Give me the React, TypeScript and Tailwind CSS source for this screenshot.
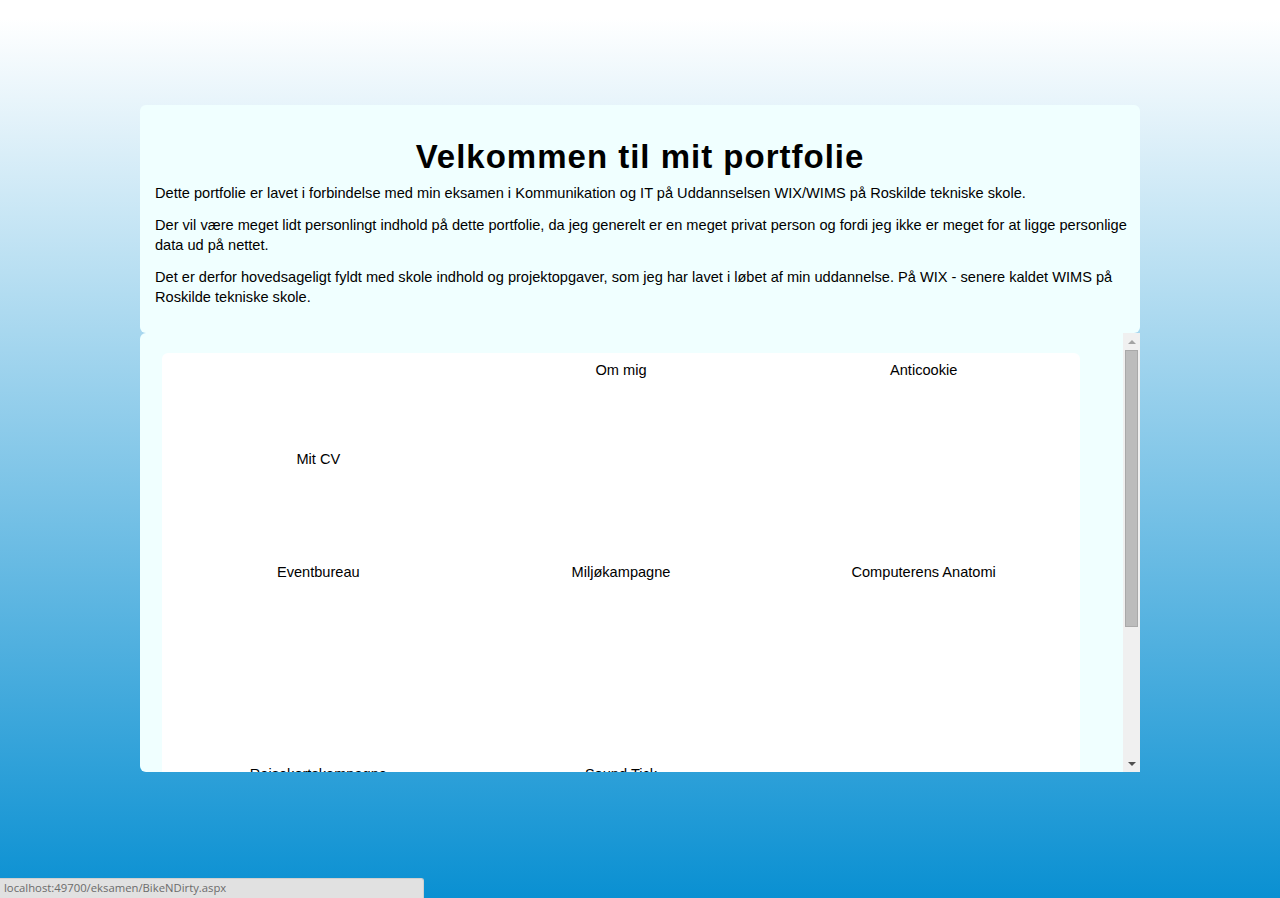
const projects = [
  { title: 'Mit CV', image: false },
  { title: 'Om mig', image: true },
  { title: 'Anticookie', image: true },
  { title: 'Eventbureau', image: true },
  { title: 'Miljøkampagne', image: true },
  { title: 'Computerens Anatomi', image: true },
  { title: 'Rejsekortskampagne', image: true },
  { title: 'Sound Tick', image: true },
  { title: '', image: true },
]

function ProjectCell({ title, image }: { title: string; image: boolean }) {
  if (!image) {
    return (
      <div className="h-[202px] flex items-center justify-center">
        <span className="leading-4">{title}</span>
      </div>
    )
  }
  return (
    <div className="h-[202px] pt-1 text-center">
      <div className="leading-4">{title}</div>
    </div>
  )
}

function Scrollbar() {
  return (
    <div className="w-[17px] h-full bg-[#f0f0f0] flex flex-col items-center">
      {/* up arrow */}
      <div className="h-[17px] w-full flex items-center justify-center">
        <div className="w-0 h-0 border-l-[4px] border-r-[4px] border-b-[4px] border-l-transparent border-r-transparent border-b-[#a3a3a3]" />
      </div>
      <div className="flex-1 w-full px-[2px]">
        <div className="h-[277px] w-full bg-[#bcbcbc] border border-[#a9a9a9]" />
      </div>
      {/* down arrow */}
      <div className="h-[17px] w-full flex items-center justify-center">
        <div className="w-0 h-0 border-l-[4px] border-r-[4px] border-t-[4px] border-l-transparent border-r-transparent border-t-[#505050]" />
      </div>
    </div>
  )
}

export default function App() {
  return (
    <div
      className="relative h-[898px] w-full overflow-hidden bg-[linear-gradient(to_bottom,#ffffff_0%,#ffffff_2%,#0a90d2_100%)] text-black text-[14.6px]"
      style={{ fontFamily: '"Liberation Sans", Arial, sans-serif' }}
    >
      <div className="w-[1000px] mx-auto pt-[105px]">
        {/* Header */}
        <section className="h-[228px] bg-[#f0ffff] rounded-md pl-[15px] pr-[6px] pt-[34px]">
          <h1 className="text-[33px] font-bold leading-9 tracking-[1px] text-center pr-[9px]">
            Velkommen til mit portfolie
          </h1>
          <div className="mt-2 leading-5">
            <p className="mb-3">
              Dette portfolie er lavet i forbindelse med min eksamen i Kommunikation og IT på Uddannselsen WIX/WIMS på Roskilde tekniske skole.
            </p>
            <p className="mb-3">
              Der vil være meget lidt personlingt indhold på dette portfolie, da jeg generelt er en meget privat person og fordi jeg ikke er meget for at ligge personlige data ud på nettet.
            </p>
            <p className="mb-3">
              Det er derfor hovedsageligt fyldt med skole indhold og projektopgaver, som jeg har lavet i løbet af min uddannelse. På WIX - senere kaldet WIMS på Roskilde tekniske skole.
            </p>
          </div>
        </section>

        {/* Projects */}
        <section className="h-[439px] bg-[#f0ffff] rounded-md rounded-r-none flex overflow-hidden">
          <div className="flex-1 overflow-hidden pl-[22px] pt-5">
            <div className="w-[918px] bg-white rounded-md p-[5px]">
              <div className="grid grid-cols-3">
                {projects.map((p, i) => (
                  <ProjectCell key={i} title={p.title} image={p.image} />
                ))}
              </div>
            </div>
          </div>
          <Scrollbar />
        </section>
      </div>

      {/* Status bar */}
      <div className="absolute bottom-0 left-0 w-[424px] h-5 bg-[#e1e1e1] border-t border-r border-[#cfcfcf] rounded-tr-[3px] pl-1 flex items-center">
        <span className="text-[11.3px] text-[#6b6b6b]" style={{ fontFamily: '"Open Sans", sans-serif' }}>
          localhost:49700/eksamen/BikeNDirty.aspx
        </span>
      </div>
    </div>
  )
}
